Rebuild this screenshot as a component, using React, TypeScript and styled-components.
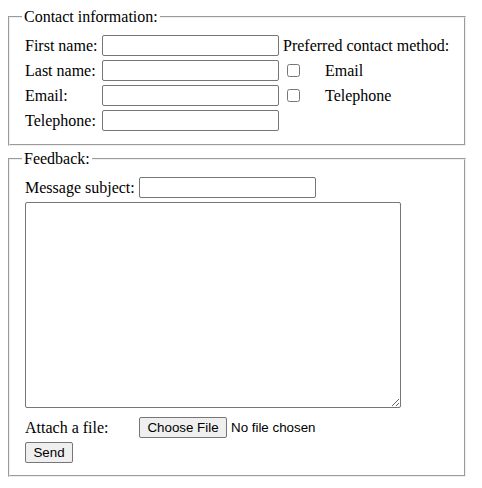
import React from "react";
import styled, { createGlobalStyle } from "styled-components";

const GlobalStyle = createGlobalStyle`
  body {
    margin: 8px;
    background: #fff;
    color: #000;
    font-family: "Liberation Serif", "Times New Roman", serif;
    font-size: 16px;
  }
`;

const Fieldset = styled.fieldset<{ $top?: number }>`
  width: 458px;
  box-sizing: border-box;
  margin: ${(p) => p.$top ?? 0}px 0 0;
  padding: 0 12px 10px;
`;

const Legend = styled.legend`
  padding: 0 2px;
  font-size: 16px;
`;

const ContactGrid = styled.div`
  display: grid;
  grid-template-columns: 73px 177px auto;
  grid-auto-rows: 21px;
  column-gap: 4px;
  row-gap: 4px;
  align-items: center;
  padding: 9px 3px 3px;
  white-space: nowrap;
`;

const TextInput = styled.input`
  box-sizing: border-box;
  width: 177px;
  height: 21px;
  margin: 0;
  padding: 1px 2px;
  border: 1px solid #767676;
  border-radius: 2px;
  background: #fff;
  font: 13.333px "Liberation Sans", Arial, sans-serif;
`;

const CheckOption = styled.label`
  display: flex;
  align-items: center;
`;

const CheckBox = styled.input`
  width: 13px;
  height: 13px;
  margin: 0 0 0 4px;
`;

const CheckText = styled.span`
  margin-left: 25px;
`;

const FeedbackBody = styled.div`
  display: flex;
  flex-direction: column;
  align-items: flex-start;
  padding: 9px 3px 2px;
`;

const FieldRow = styled.div<{ $top?: number }>`
  display: grid;
  grid-template-columns: 114px auto;
  align-items: center;
  height: 21px;
  margin-top: ${(p) => p.$top ?? 0}px;
`;

const MessageBox = styled.textarea`
  box-sizing: border-box;
  width: 376px;
  height: 206px;
  margin: 4px 0 0;
  padding: 2px;
  border: 1px solid #767676;
  border-radius: 2px;
  font: 13.333px "Liberation Mono", monospace;
`;

const FileInput = styled.input`
  font: 13.333px "Liberation Sans", Arial, sans-serif;
  color: #000;
  margin: 0;

  &::file-selector-button {
    box-sizing: border-box;
    width: 88px;
    height: 21px;
    margin: 0 4px 0 0;
    padding: 1px 6px;
    border: 1px solid #767676;
    border-radius: 2px;
    background: #efefef;
    color: #000;
    font: 13.333px "Liberation Sans", Arial, sans-serif;
  }
`;

const Button = styled.button`
  box-sizing: border-box;
  width: 48px;
  height: 21px;
  margin: 4px 0 0;
  padding: 1px 6px;
  border: 1px solid #767676;
  border-radius: 2px;
  background: #efefef;
  color: #000;
  font: 13.333px "Liberation Sans", Arial, sans-serif;
`;

export default function App() {
  return (
    <form onSubmit={(e) => e.preventDefault()}>
      <GlobalStyle />
      <Fieldset>
        <Legend>Contact information:</Legend>
        <ContactGrid>
          <span>First name:</span>
          <TextInput type="text" />
          <span>Preferred contact method:</span>

          <span>Last name:</span>
          <TextInput type="text" />
          <CheckOption>
            <CheckBox type="checkbox" />
            <CheckText>Email</CheckText>
          </CheckOption>

          <span>Email:</span>
          <TextInput type="text" />
          <CheckOption>
            <CheckBox type="checkbox" />
            <CheckText>Telephone</CheckText>
          </CheckOption>

          <span>Telephone:</span>
          <TextInput type="text" />
          <span />
        </ContactGrid>
      </Fieldset>

      <Fieldset $top={4}>
        <Legend>Feedback:</Legend>
        <FeedbackBody>
          <FieldRow>
            <span>Message subject:</span>
            <TextInput type="text" />
          </FieldRow>
          <MessageBox />
          <FieldRow $top={9}>
            <span>Attach a file:</span>
            <FileInput type="file" />
          </FieldRow>
          <Button type="submit">Send</Button>
        </FeedbackBody>
      </Fieldset>
    </form>
  );
}
